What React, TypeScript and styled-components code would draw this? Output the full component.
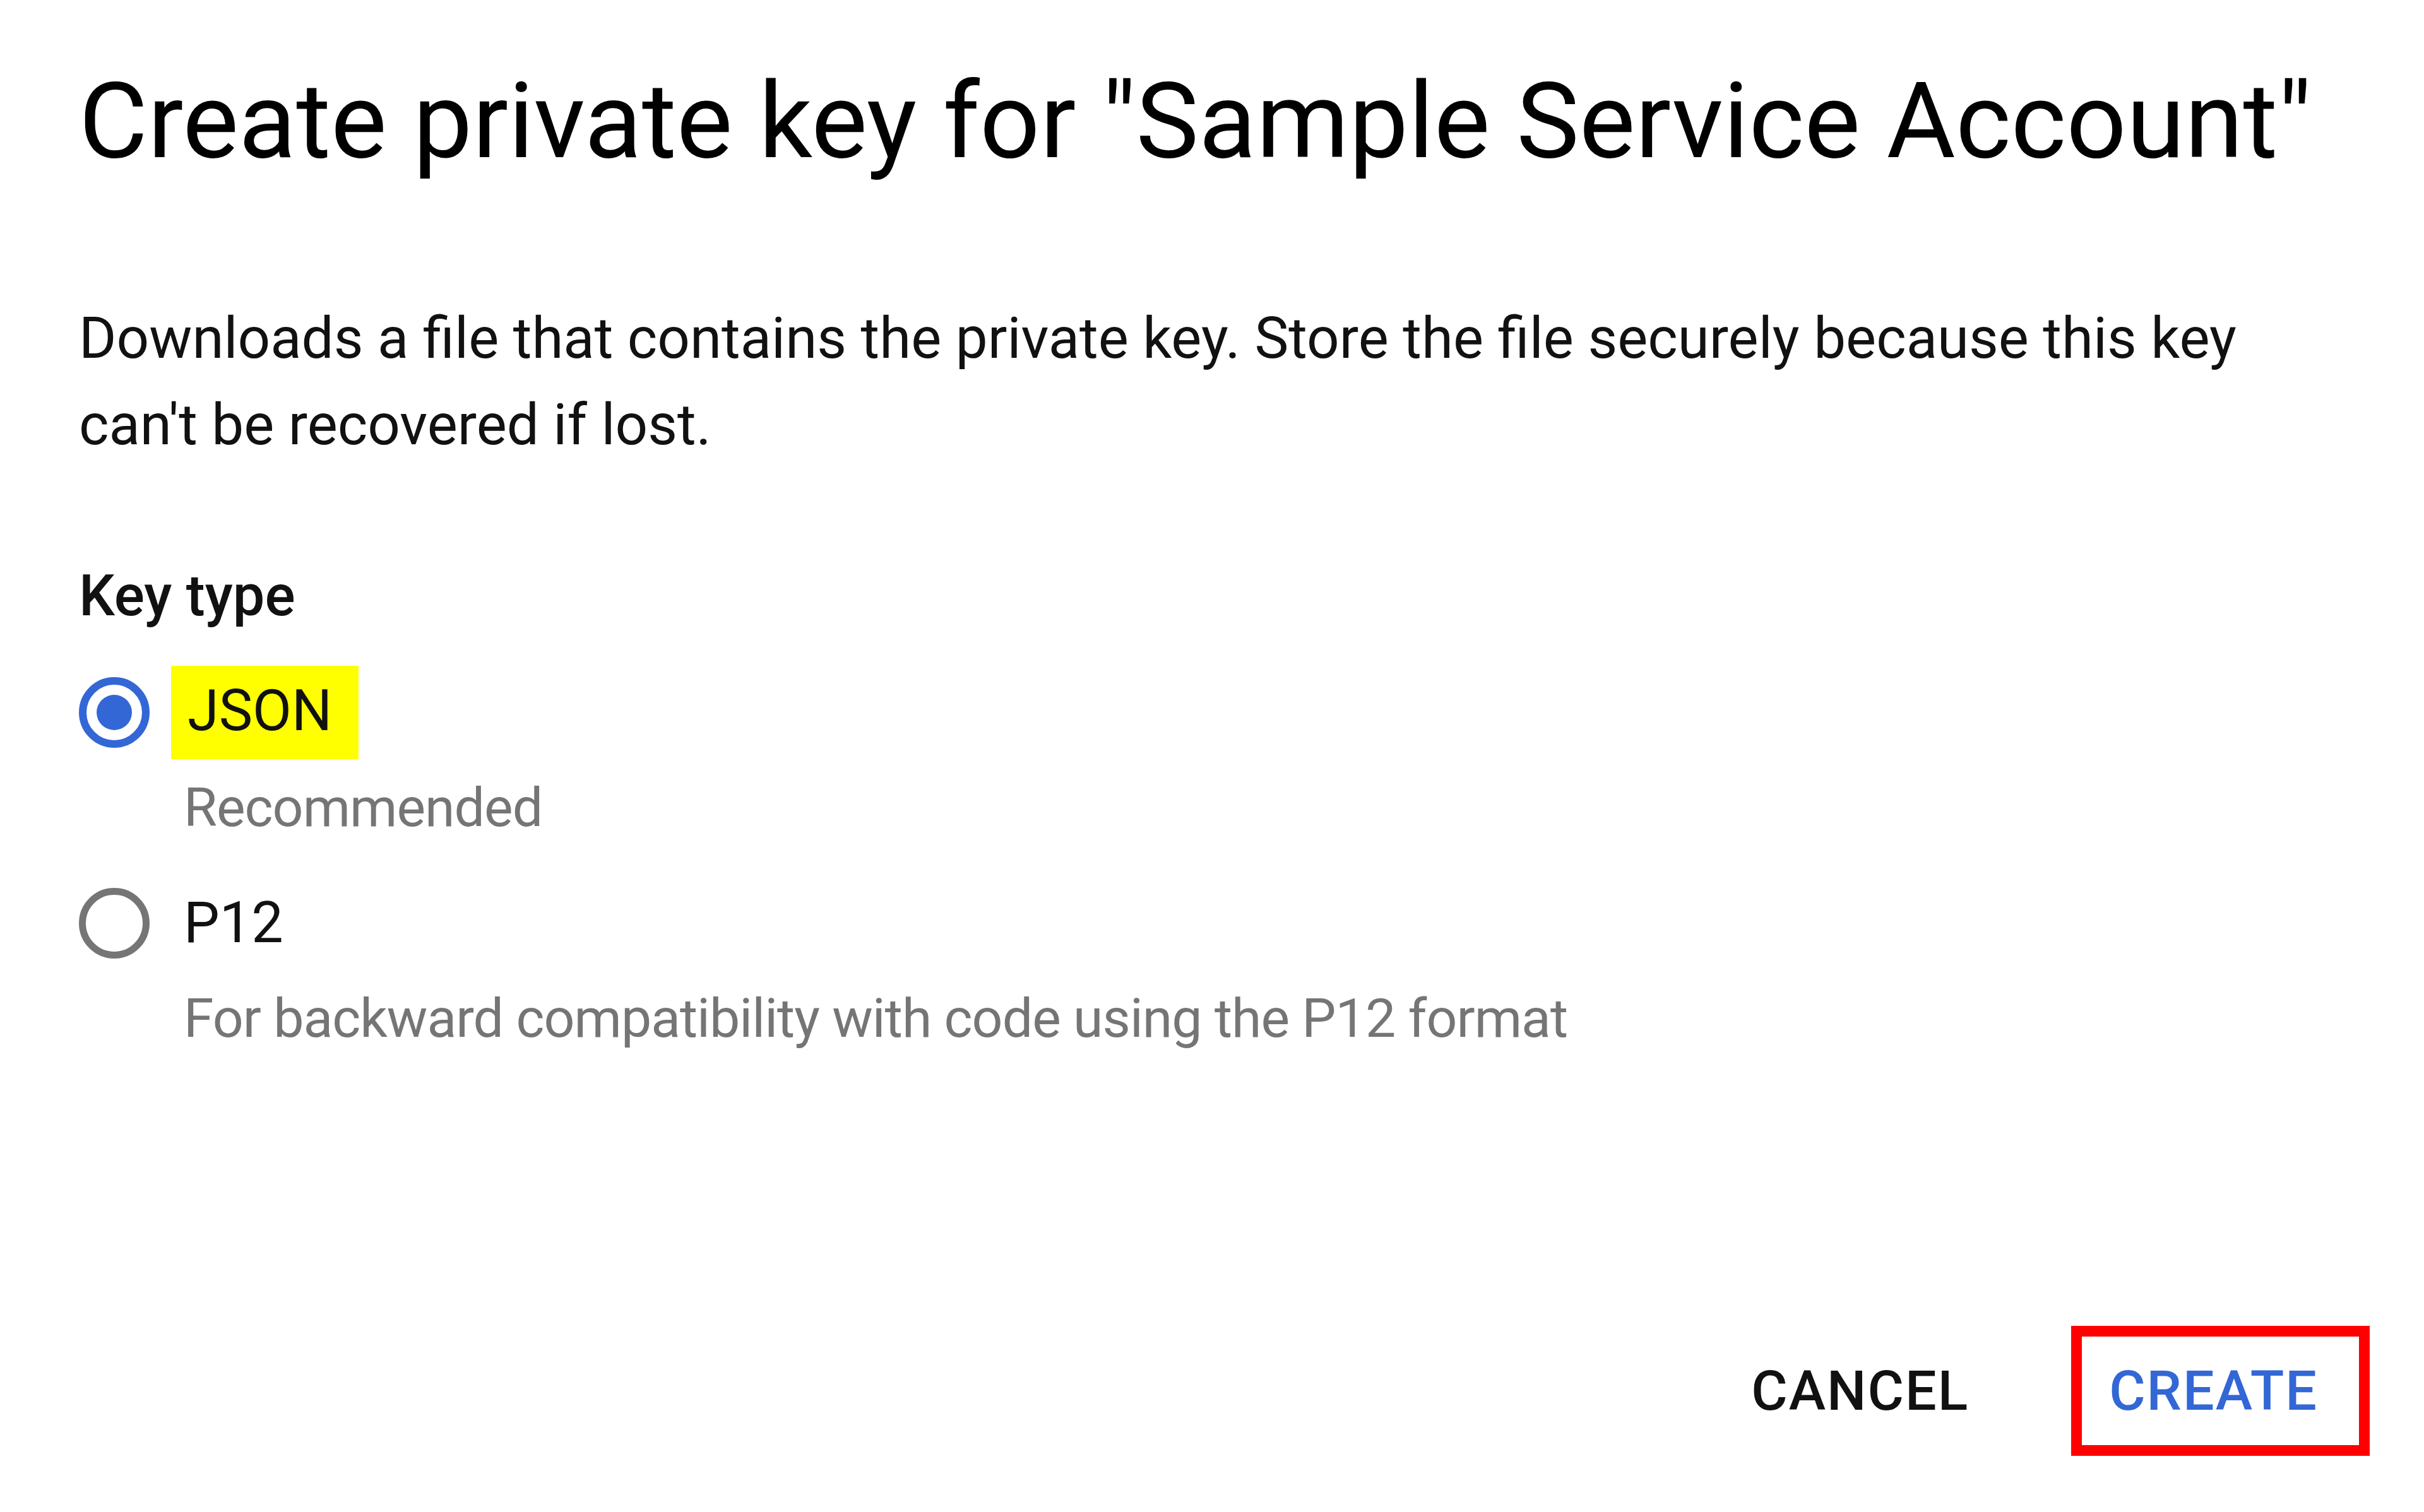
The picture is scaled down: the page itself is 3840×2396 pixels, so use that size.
import * as React from "react";
import styled, { createGlobalStyle } from "styled-components";

const GlobalStyle = createGlobalStyle`
    html, body {
        margin: 0;
        padding: 0;
        background: #ffffff;
    }

    body {
        font-family: Roboto, "Liberation Sans", Arial, sans-serif;
        color: #212121;
    }
`;

interface KeyOption {
    id: string;
    label: string;
    hint: string;
    highlighted?: boolean;
}

const keyOptions: KeyOption[] = [
    { id: "json", label: "JSON", hint: "Recommended", highlighted: true },
    { id: "p12", label: "P12", hint: "For backward compatibility with code using the P12 format" },
];

export default function App() {
    const [keyType, setKeyType] = React.useState("json");

    return <>
        <GlobalStyle />
        <Dialog>
            <Title>Create private key for "Sample Service Account"</Title>
            <Description>
                Downloads a file that contains the private key. Store the file securely because this key
                can't be recovered if lost.
            </Description>

            <FieldLabel>Key type</FieldLabel>
            <OptionList>
                { keyOptions.map(option =>
                    <Option key={ option.id } onMouseDown={ () => setKeyType(option.id) }>
                        <OptionRow>
                            <Radio checked={ keyType === option.id } />
                            <OptionLabel>
                                { option.highlighted
                                    ? <Highlight>{ option.label }</Highlight>
                                    : option.label }
                            </OptionLabel>
                        </OptionRow>
                        <OptionHint>{ option.hint }</OptionHint>
                    </Option>
                ) }
            </OptionList>

            <Actions>
                <TextButton>CANCEL</TextButton>
                <TextButton primary outlined>CREATE</TextButton>
            </Actions>
        </Dialog>
    </>;
}

const Dialog = styled.div`
    box-sizing: border-box;
    min-height: 100vh;
    display: flex;
    flex-direction: column;
    padding: 90px 86px 89px 125px;
`;

const Title = styled.h1`
    margin: 0;
    font-size: 167.5px;
    font-weight: 400;
    line-height: 204px;
    color: #000000;
    white-space: nowrap;
`;

const Description = styled.p`
    margin: 174px 0 0;
    max-width: 3500px;
    font-size: 90.7px;
    line-height: 137px;
    color: #111111;
`;

const FieldLabel = styled.div`
    margin-top: 137px;
    font-size: 90px;
    font-weight: 500;
    line-height: 132px;
    color: #111111;
`;

const OptionList = styled.div`
    display: flex;
    flex-direction: column;
    gap: 42px;
    margin-top: 43px;
`;

const Option = styled.div`
    display: flex;
    flex-direction: column;
    cursor: pointer;
`;

const OptionRow = styled.div`
    display: flex;
    align-items: center;
    gap: 54px;
    height: 149px;
`;

const Radio = styled.span<{ checked: boolean }>`
    box-sizing: border-box;
    flex: none;
    width: 112px;
    height: 112px;
    border-radius: 50%;
    border: ${ p => p.checked ? "12px solid #3367d6" : "11px solid #757575" };
    display: flex;
    align-items: center;
    justify-content: center;

    &::after {
        content: "";
        width: 56px;
        height: 56px;
        border-radius: 50%;
        background: #3367d6;
        display: ${ p => p.checked ? "block" : "none" };
    }
`;

const OptionLabel = styled.div`
    font-size: 90px;
    line-height: normal;
    color: #111111;
`;

const Highlight = styled.span`
    display: inline-block;
    margin-left: -20px;
    padding: 19px 42px 23px 26px;
    background: #ffff00;
    line-height: 106px;
`;

const OptionHint = styled.div`
    margin: 11px 0 0 166px;
    font-size: 86px;
    letter-spacing: -1px;
    line-height: 132px;
    color: #757575;
`;

const Actions = styled.div`
    margin-top: auto;
    display: flex;
    justify-content: flex-end;
    align-items: center;
    gap: 162px;
`;

const TextButton = styled.button<{ primary?: boolean; outlined?: boolean }>`
    box-sizing: border-box;
    margin: 0;
    padding: ${ p => p.outlined ? "0 65px 0 43px" : "0" };
    border: ${ p => p.outlined ? "17px solid #ff0000" : "none" };
    background: transparent;
    font-family: Roboto, "Liberation Sans", Arial, sans-serif;
    font-size: 88px;
    font-weight: 500;
    letter-spacing: 2px;
    line-height: 172px;
    color: ${ p => p.primary ? "#3367d6" : "#111111" };
    cursor: pointer;
`;
